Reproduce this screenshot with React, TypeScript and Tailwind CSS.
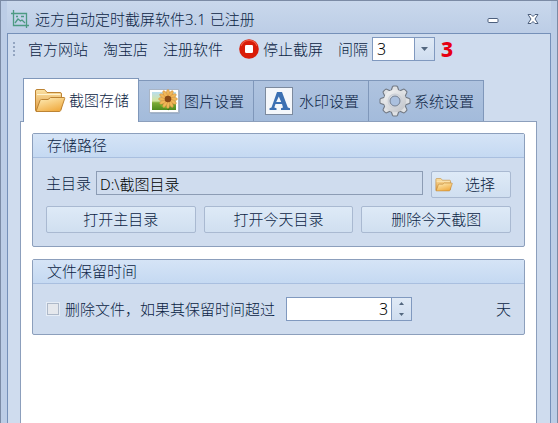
import { useState } from "react";
import type { ReactNode } from "react";

function AppLogo() {
  return (
    <svg width="18" height="18" viewBox="0 0 18 18" fill="none" stroke="#4d9a83" strokeWidth="1.3">
      <path d="M2.500 0v15.500H18M0 3.500h15.500V18" />
      <path d="M4 13l3-4 2.500 2 1.500-1 3 3" />
      <path d="M5 6.500h2M10 6.500h3" />
    </svg>
  );
}

function StopIcon() {
  return (
    <svg width="20" height="20" viewBox="0 0 20 20">
      <circle cx="10" cy="10" r="9.800" fill="#d91c08" />
      <path d="M2 7a8.500 8.500 0 0 1 16 0" fill="none" stroke="#ee5a42" strokeWidth="1.200" />
      <rect x="6" y="6" width="8" height="8" rx="1.200" fill="#fff" />
    </svg>
  );
}

function FolderIcon({ size = 32, id }: { size?: number; id: string }) {
  return (
    <svg width={size} height={size} viewBox="0 0 32 32">
      <defs>
        <linearGradient id={`${id}-back`} x1="0" y1="0" x2="0" y2="1">
          <stop offset="0" stopColor="#fbe3a6" />
          <stop offset="1" stopColor="#e19c42" />
        </linearGradient>
        <linearGradient id={`${id}-front`} x1="0" y1="0" x2=".6" y2="1">
          <stop offset="0" stopColor="#fff0bd" />
          <stop offset="1" stopColor="#f0ad45" />
        </linearGradient>
      </defs>
      <path d="M1.500 25.500V6q0-1.500 1.500-1.500h7q1 0 1.500 1l1.500 2h13q1.500 0 1.500 1.500v15z" fill={`url(#${id}-back)`} stroke="#bd8434" />
      <path d="M3 9.500h23.500" stroke="#fff3cf" />
      <path d="M2 26.500l4-11q.400-1 1.500-1H14l2.500-2H30q1 0 .700 1l-4 12q-.300 1-1.500 1z" fill={`url(#${id}-front)`} stroke="#bd8434" />
    </svg>
  );
}

const petals = [0, 30, 60, 90, 120, 150, 180, 210, 240, 270, 300, 330];

function PictureIcon() {
  return (
    <svg width="32" height="32" viewBox="0 0 32 32">
      <defs>
        <linearGradient id="photo" x1="0" y1="0" x2="0" y2="1">
          <stop offset="0" stopColor="#b9def0" />
          <stop offset=".500" stopColor="#d4e49b" />
          <stop offset=".600" stopColor="#7cab35" />
          <stop offset="1" stopColor="#4f8a1d" />
        </linearGradient>
      </defs>
      <rect x="1.500" y="5.500" width="29" height="23" fill="#7d8da5" opacity=".600" />
      <rect x=".500" y="4.500" width="29" height="23" fill="#fff" stroke="#a9b5c6" />
      <rect x="3" y="7" width="24" height="18" fill="url(#photo)" />
      <path d="M19 14q2 6 0 11" stroke="#397319" strokeWidth="1.500" fill="none" />
      <path d="M19 23q-5-5-8-3 3 4 8 3" fill="#78b32b" />
      {petals.map((deg) => (
        <ellipse key={deg} cx="19" cy="8.500" rx="1.700" ry="4" fill="#f1b757" stroke="#c6843a" strokeWidth=".400" transform={`rotate(${deg} 19 14)`} />
      ))}
      <circle cx="19" cy="14" r="3.300" fill="#8a4a17" />
    </svg>
  );
}

function WatermarkIcon() {
  return (
    <svg width="32" height="32" viewBox="0 0 32 32">
      <rect x="1.500" y="2.500" width="27" height="27" fill="#f4f7fb" stroke="#7c8a9e" />
      <path
        d="M13 7h5l5.800 15.500 2.200.700V25h-9v-1.800l2-.700-1-3.500h-6.500l-1.200 3.500 2.200.700V25H5.500v-1.800l2-.700zM14.800 11.500L12.200 17h5z"
        fill="#3b70b3"
        fillRule="evenodd"
      />
    </svg>
  );
}

const teeth = [0, 45, 90, 135, 180, 225, 270, 315];

function GearIcon() {
  return (
    <svg width="32" height="32" viewBox="0 0 32 32">
      <defs>
        <linearGradient id="steel" gradientUnits="userSpaceOnUse" x1="4" y1="2" x2="28" y2="30">
          <stop offset="0" stopColor="#fafafa" />
          <stop offset="1" stopColor="#b9bcc2" />
        </linearGradient>
      </defs>
      <g fill="#737a85">
        {teeth.map((deg) => (
          <path key={deg} d="M11 7l2-5.500q.500-1 1.500-1h3q1 0 1.500 1L21 7z" transform={`rotate(${deg} 16 16)`} />
        ))}
        <circle cx="16" cy="16" r="12" />
      </g>
      <g fill="#dfe1e4">
        {teeth.map((deg) => (
          <path key={deg} d="M12 8l2-6q.200-.500 1-.500h2q.800 0 1 .500l2 6z" transform={`rotate(${deg} 16 16)`} />
        ))}
      </g>
      <circle cx="16" cy="16" r="11.200" fill="url(#steel)" />
      <circle cx="16" cy="16" r="6.700" fill="none" stroke="#ccd0d7" strokeWidth="1.500" />
      <circle cx="16" cy="16" r="5" fill="#abc0de" stroke="#737f92" />
    </svg>
  );
}

const tabs = [
  { label: "截图存储", icon: <FolderIcon id="tab" /> },
  { label: "图片设置", icon: <PictureIcon /> },
  { label: "水印设置", icon: <WatermarkIcon /> },
  { label: "系统设置", icon: <GearIcon /> },
];

function Group({ title, children }: { title: string; children: ReactNode }) {
  return (
    <section className="rounded-[2px] border border-[#8c9fbc] bg-[#cfdcee]">
      <h2 className="h-6 border-b border-[#a9bfdf] bg-linear-to-b from-[#d5e4f6] to-[#c5d9f2] pl-[14px] leading-[22px]">{title}</h2>
      <div className="px-[13px] py-[13px]">{children}</div>
    </section>
  );
}

function PushButton({ children, className = "" }: { children: ReactNode; className?: string }) {
  return (
    <button
      type="button"
      className={`flex h-[27px] items-center justify-center rounded-[2px] border border-[#a9b9d1] bg-linear-to-b from-[#deeaf7] to-[#d0dff0] ${className}`}
    >
      {children}
    </button>
  );
}

export default function App() {
  const [active, setActive] = useState(0);
  const [seconds, setSeconds] = useState("3");
  const [days, setDays] = useState("3");

  return (
    <div className="flex min-h-screen flex-col border-x border-t border-[#7b8ba5] bg-[#bccde6] px-[6px] font-['Noto_Sans','Noto_Sans_CJK_SC',sans-serif] text-[15px] font-light text-[#0b2444]">
      <header className="flex h-8 items-center bg-linear-to-b from-[#c9d8ec] to-[#bccde6] pt-1 pl-1">
        <AppLogo />
        <h1 className="ml-[6px] flex-1 leading-5">远方自动定时截屏软件3.1 已注册</h1>
        <button type="button" aria-label="最小化" className="mr-7">
          <svg width="12" height="12" viewBox="0 0 12 12">
            <rect x="1" y="5.500" width="10" height="4" rx="1" fill="#fff" stroke="#4c5f7d" />
          </svg>
        </button>
        <button type="button" aria-label="关闭" className="mr-3">
          <svg width="12" height="12" viewBox="0 0 12 12">
            <path d="M1 1.500h3l2 2 2-2h3L8 6l3 4.500H8l-2-2-2 2H1L4 6z" fill="#fff" stroke="#4c5f7d" />
          </svg>
        </button>
      </header>

      <main className="flex flex-1 flex-col border-x border-t border-[#7590b8] bg-[#cfdcee] pt-[3px] pr-[13px] pl-3">
        <div className="flex h-6 items-center whitespace-nowrap">
          <svg width="2" height="14" viewBox="0 0 2 14" fill="#93a5c0" className="-ml-[7px]">
            <path d="M0 0h2v2H0zM0 4h2v2H0zM0 8h2v2H0zM0 12h2v2H0z" />
          </svg>
          <button type="button" className="ml-[13px]">官方网站</button>
          <button type="button" className="ml-[15px]">淘宝店</button>
          <button type="button" className="ml-[15px]">注册软件</button>
          <button type="button" className="ml-4 flex items-center gap-1">
            <StopIcon />
            停止截屏
          </button>
          <label htmlFor="interval" className="ml-[15px]">间隔</label>
          <div className="ml-1 flex h-6 w-[63px] border border-[#8099bf] bg-white">
            <input
              id="interval"
              value={seconds}
              onChange={(e) => setSeconds(e.target.value)}
              className="w-0 flex-1 pl-1 text-base text-black outline-none"
            />
            <button type="button" aria-label="展开" className="flex w-5 items-center justify-center border-l border-[#8099bf] bg-linear-to-b from-[#e0eaf6] to-[#cfddef]">
              <svg width="7" height="4" viewBox="0 0 7 4">
                <path d="M0 0h7L3.500 4z" fill="#53677f" />
              </svg>
            </button>
          </div>
          <output className="ml-[6px] text-[21px] leading-6 font-extrabold text-[#e60012]">3</output>
        </div>

        <div role="tablist" className="mt-[17px] flex items-end pl-[3px]">
          {tabs.map((tab, i) => (
            <button
              key={tab.label}
              type="button"
              role="tab"
              aria-selected={i === active}
              onClick={() => setActive(i)}
              className={
                i === active
                  ? "relative -mb-px flex h-11 w-[116px] items-center gap-[3px] border border-b-0 border-[#7f97ba] bg-white pl-[10px]"
                  : "flex h-[41px] w-[115px] items-center gap-[3px] border-t border-r border-[#7f97ba] bg-linear-to-b from-[#afc3df] to-[#a3bbdb] pl-[10px]"
              }
            >
              {tab.icon}
              {tab.label}
            </button>
          ))}
        </div>

        <div role="tabpanel" className="flex flex-1 flex-col gap-3 border-x border-t border-[#8c9fbc] bg-white px-[11px] pt-[11px]">
          <Group title="存储路径">
            <div className="flex items-start">
              <label htmlFor="root-dir" className="w-[50px] leading-6">主目录</label>
              <input id="root-dir" readOnly value="D:\截图目录" className="h-6 min-w-0 flex-1 border border-[#8c9cb4] px-[3px] text-black outline-none" />
              <PushButton className="ml-2 w-20 gap-3 pr-3">
                <FolderIcon size={18} id="browse" />
                选择
              </PushButton>
            </div>
            <div className="mt-2 grid grid-cols-3 gap-2">
              <PushButton>打开主目录</PushButton>
              <PushButton>打开今天目录</PushButton>
              <PushButton>删除今天截图</PushButton>
            </div>
          </Group>

          <Group title="文件保留时间">
            <div className="flex items-center">
              <input
                id="purge"
                type="checkbox"
                className="ml-px size-3 appearance-none border border-[#aeb9c9] bg-[#e5e8ed] outline-1 outline-[#e6edf6] checked:bg-[#53677f]"
              />
              <label htmlFor="purge" className="ml-[6px]">删除文件，如果其保留时间超过</label>
              <div className="ml-[11px] flex h-6 w-[126px] border border-[#8099bf] bg-white">
                <input
                  aria-label="保留天数"
                  value={days}
                  onChange={(e) => setDays(e.target.value)}
                  className="w-0 flex-1 pr-[3px] text-right text-base text-black outline-none"
                />
                <div className="flex w-5 flex-col border-l border-[#8099bf] bg-linear-to-b from-[#e0eaf6] to-[#cfddef]">
                  <button type="button" aria-label="增加" onClick={() => setDays(String(Number(days) + 1))} className="flex flex-1 items-center justify-center">
                    <svg width="5" height="3" viewBox="0 0 5 3">
                      <path d="M0 3h5L2.500 0z" fill="#53677f" />
                    </svg>
                  </button>
                  <button type="button" aria-label="减少" onClick={() => setDays(String(Number(days) - 1))} className="flex flex-1 items-center justify-center">
                    <svg width="5" height="3" viewBox="0 0 5 3">
                      <path d="M0 0h5L2.500 3z" fill="#53677f" />
                    </svg>
                  </button>
                </div>
              </div>
              <span className="ml-auto">天</span>
            </div>
          </Group>
        </div>
      </main>
    </div>
  );
}
